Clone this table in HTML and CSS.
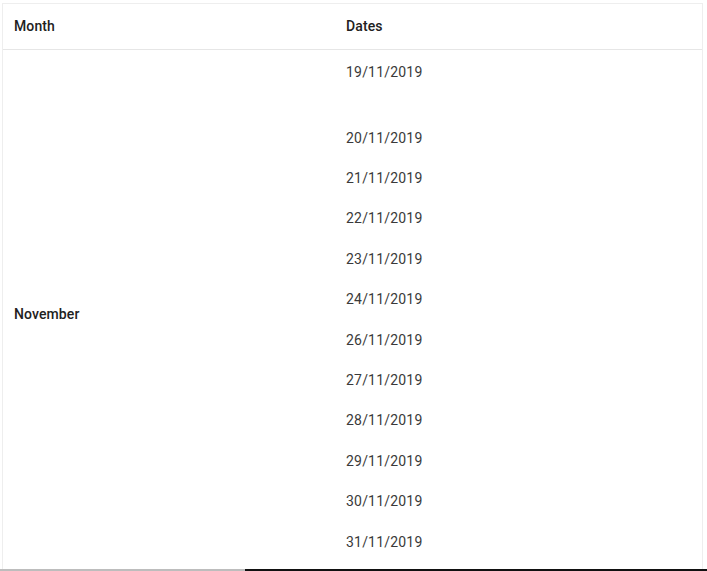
FILE: index.html
```html
<!DOCTYPE html>
<html lang="en">
<head>
  <meta charset="UTF-8">
  <title>Dates</title>
  <link rel="stylesheet" href="styles.css">
</head>
<body>
  <div class="card">
    <div class="head">
      <div class="cell first-col">Month</div>
      <div class="cell">Dates</div>
    </div>
    <div class="body">
      <div class="month">November</div>
      <ul class="dates">
        <li class="first">19/11/2019</li>
        <li>20/11/2019</li>
        <li>21/11/2019</li>
        <li>22/11/2019</li>
        <li>23/11/2019</li>
        <li>24/11/2019</li>
        <li>26/11/2019</li>
        <li>27/11/2019</li>
        <li>28/11/2019</li>
        <li>29/11/2019</li>
        <li>30/11/2019</li>
        <li>31/11/2019</li>
      </ul>
    </div>
  </div>
  <div class="scrollbar">
    <div class="track"></div>
    <div class="thumb"></div>
  </div>
</body>
</html>
```

FILE: styles.css
```css
body {
  font-family: Roboto, Arial, sans-serif;
  font-size: 14px;
  background: #fff;
  margin: 0;
  padding: 0;
  color: #333;
}
.card {
  margin: 3px 4px 0 2px;
  border: 1px solid #eee;
  background: #fff;
}
.head {
  display: grid;
  grid-template-columns: 331px 1fr;
  height: 43px;
  padding-bottom: 2px;
  align-items: center;
  border-bottom: 1px solid #e6e6e6;
}
.cell {
  padding: 0 12px;
  font-weight: 500;
  color: #212121;
  letter-spacing: 0.1px;
}
.first-col {
  padding-left: 11px;
}
.body {
  display: grid;
  grid-template-columns: 331px 1fr;
}
.month {
  display: flex;
  align-items: center;
  padding: 0 11px;
  font-weight: 500;
  color: #212121;
  letter-spacing: 0.1px;
}
.dates {
  list-style: none;
  margin: 0;
  padding: 0 0 15px 0;
}
.dates li {
  padding: 12px;
  line-height: 16.4px;
  color: #3a3a3a;
  letter-spacing: 0.2px;
}
.dates li.first {
  padding-top: 14px;
  height: 41.6px;
}
.scrollbar {
  position: fixed;
  left: 0;
  right: 0;
  bottom: 0;
  height: 2px;
  display: flex;
}
.track {
  width: 245px;
  background: #bdbdbd;
}
.thumb {
  flex: 1;
  background: #111;
}
```
